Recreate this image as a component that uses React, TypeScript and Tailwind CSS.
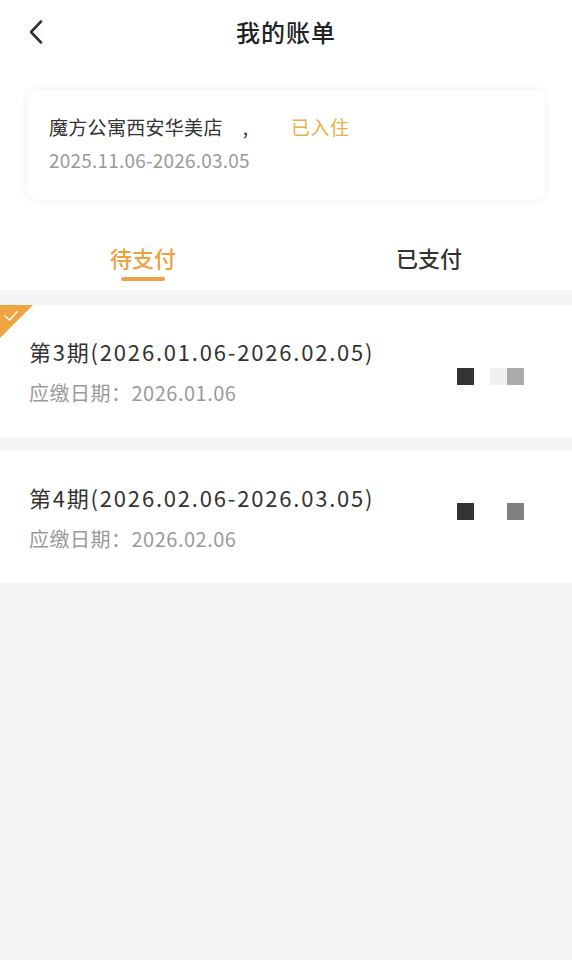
import React from "react";

const font = { fontFamily: '"Noto Sans CJK SC", "Noto Sans", sans-serif' };

function Row({
  title,
  date,
  checked,
  squaresTop,
  variant,
}: {
  title: string;
  date: string;
  checked?: boolean;
  squaresTop: string;
  variant: 1 | 2;
}) {
  return (
    <div className="relative bg-white flex justify-between pl-[29px] pr-[48px] py-[31px]">
      {checked && (
        <svg className="absolute left-0 top-0" width="33" height="33" viewBox="0 0 33 33">
          <polygon points="0,0 33,0 0,33" fill="#f0a440" />
          <polyline points="5,11 9.5,15 17,7" fill="none" stroke="#ffffff" strokeWidth="1.6" strokeLinecap="round" strokeLinejoin="round" />
        </svg>
      )}
      <div className="flex flex-col gap-[14px]">
        <div className="text-[22px] leading-[30px] text-[#333333] tracking-[1.8px]">{title}</div>
        <div className="text-[20px] leading-[26px] text-[#9a9a9a] tracking-[0.5px]">应缴日期：{date}</div>
      </div>
      <div className={`flex self-start ${squaresTop}`}>
        <div className="w-[17px] h-[17px] bg-[#333333]" />
        {variant === 1 ? (
          <>
            <div className="w-[17px] h-[17px] bg-[#f0f0f0] ml-[16px]" />
            <div className="w-[17px] h-[17px] bg-[#aaaaaa]" />
          </>
        ) : (
          <div className="w-[17px] h-[17px] bg-[#808080] ml-[33px]" />
        )}
      </div>
    </div>
  );
}

export default function App() {
  return (
    <div className="w-full min-h-[960px] bg-[#f5f5f5]" style={font}>
      <div className="bg-white">
        <div className="h-[64px] grid grid-cols-[1fr_auto_1fr] items-center">
          <div className="pl-[28px] flex items-center">
            <svg width="16" height="26" viewBox="0 0 16 26">
              <polyline points="13,2.5 3,13 13,23.5" fill="none" stroke="#333333" strokeWidth="2.6" strokeLinecap="round" strokeLinejoin="round" />
            </svg>
          </div>
          <div className="text-[24px] leading-[32px] text-[#222222] font-medium tracking-[1px]">我的账单</div>
          <div />
        </div>
        <div className="mx-[27px] mt-[26px] h-[110px] rounded-[10px] bg-white shadow-[0_0_10px_rgba(0,0,0,0.07)] px-[22px] pt-[24px] flex flex-col gap-[7px]">
          <div className="flex items-center text-[19px] leading-[26px]">
            <span className="text-[#333333] tracking-[0.3px]">魔方公寓西安华美店</span>
            <span className="text-[#333333] ml-[20px]">,</span>
            <span className="text-[#e9b04b] ml-[43px] tracking-[0.5px]">已入住</span>
          </div>
          <div className="text-[19px] leading-[26px] text-[#9a9a9a] tracking-[0.2px]">2025.11.06-2026.03.05</div>
        </div>
        <div className="grid grid-cols-2 h-[90px] pt-[41px]">
          <div className="flex flex-col items-center">
            <div className="text-[22px] leading-[32px] text-[#eca23f] font-medium">待支付</div>
            <div className="mt-[4px] w-[44px] h-[4px] rounded-full bg-[#ef9f4c]" />
          </div>
          <div className="flex flex-col items-center">
            <div className="text-[22px] leading-[32px] text-[#333333] font-medium">已支付</div>
          </div>
        </div>
      </div>
      <div className="flex flex-col gap-[14px] pt-[15px]">
        <Row title="第3期(2026.01.06-2026.02.05)" date="2026.01.06" checked squaresTop="mt-[32px]" variant={1} />
        <Row title="第4期(2026.02.06-2026.03.05)" date="2026.02.06" squaresTop="mt-[21px]" variant={2} />
      </div>
    </div>
  );
}
